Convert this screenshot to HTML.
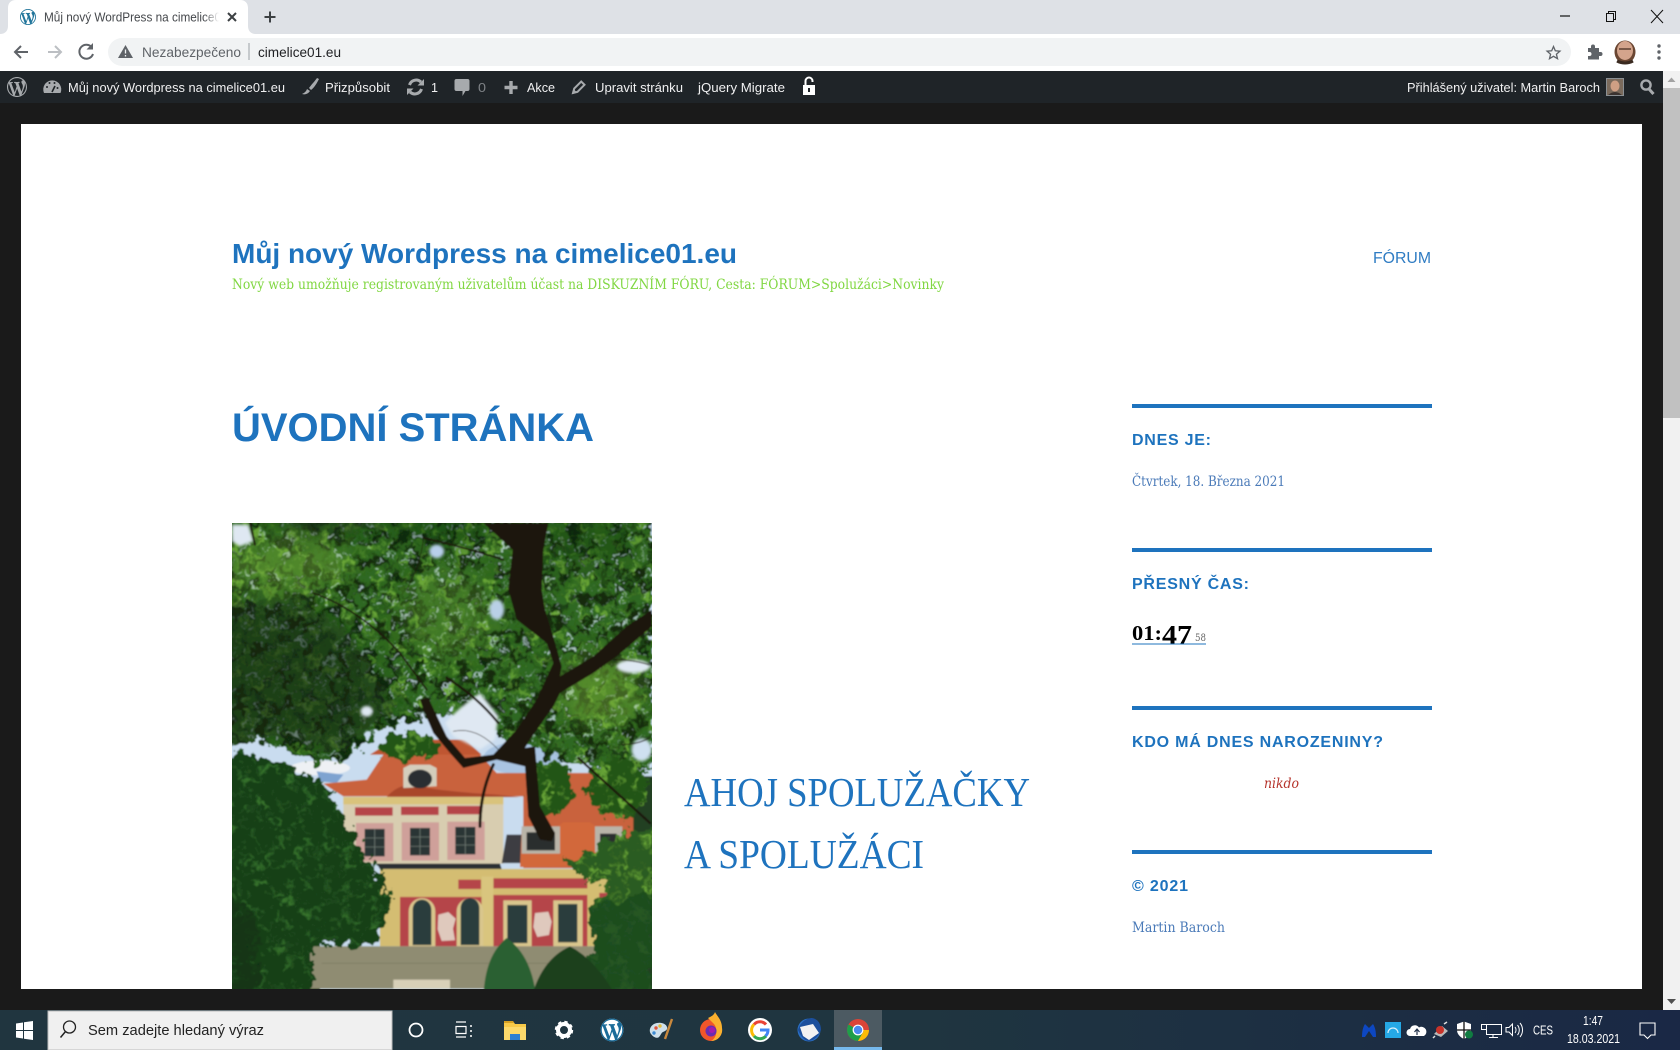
<!DOCTYPE html>
<html lang="cs"><head><meta charset="utf-8"><title>Můj nový WordPress na cimelice01.eu</title>
<style>html,body{margin:0;padding:0;background:#1a1a1a;overflow:hidden}svg{display:block}
.s{font-family:"Liberation Sans",sans-serif}.d{font-family:"DejaVu Serif","Liberation Serif",serif}.l{font-family:"Liberation Serif",serif}
.w{font-family:"Liberation Sans",sans-serif;font-size:13px;fill:#f0f0f1}
.h{font-family:"Liberation Sans",sans-serif;font-size:16px;font-weight:bold;fill:#1e73be}
.b{font-family:"DejaVu Serif","Liberation Serif",serif;font-size:14px;fill:#4a7ab8}
</style></head><body>
<svg xmlns="http://www.w3.org/2000/svg" width="1680" height="1050" viewBox="0 0 1680 1050">
<defs>
<path id="wp" d="M20 10c0-5.51-4.49-10-10-10C4.48 0 0 4.49 0 10c0 5.52 4.48 10 10 10 5.51 0 10-4.48 10-10zM7.78 15.37L4.37 6.22c.55-.02 1.17-.08 1.17-.08.5-.06.44-1.13-.06-1.11 0 0-1.45.11-2.37.11-.18 0-.37 0-.58-.01C4.12 2.69 6.87 1.11 10 1.11c2.33 0 4.45.87 6.05 2.34-.68-.11-1.65.39-1.65 1.58 0 .74.45 1.36.9 2.1.35.61.55 1.36.55 2.46 0 1.49-1.4 5-1.4 5l-3.03-8.37c.54-.02.82-.17.82-.17.5-.05.44-1.25-.06-1.22 0 0-1.44.12-2.38.12-.87 0-2.33-.12-2.33-.12-.5-.03-.56 1.2-.06 1.22l.92.08 1.26 3.41zM17.41 10c.24-.64.74-1.87.43-4.25.7 1.29 1.05 2.71 1.05 4.25 0 3.29-1.73 6.24-4.4 7.78.97-2.59 1.94-5.2 2.92-7.78zM6.1 18.09C3.12 16.65 1.11 13.53 1.11 10c0-1.3.23-2.48.72-3.59C3.25 10.3 4.67 14.2 6.1 18.09zm4.03-6.63l2.58 6.98c-.86.29-1.76.45-2.71.45-.79 0-1.57-.11-2.29-.33.81-2.38 1.62-4.74 2.42-7.1z"/>
<linearGradient id="tb" x1="0" x2="1" y1="0" y2="0"><stop offset="0" stop-color="#20353f"/><stop offset=".55" stop-color="#1f3540"/><stop offset="1" stop-color="#1a2845"/></linearGradient>
<linearGradient id="fade" x1="0" x2="1"><stop offset="0" stop-color="#fff" stop-opacity="0"/><stop offset="1" stop-color="#fff"/></linearGradient>
<clipPath id="ph"><rect x="36" y="40" width="1260" height="1397"/></clipPath>
<clipPath id="can"><path d="M0 0H1340V815L1240 800 1170 805 1090 785 1030 775 960 740 880 722 830 690 790 640 700 650 640 660 560 680 490 705 450 750 400 795 300 790 220 755 130 720 0 770Z"/></clipPath>
<clipPath id="ltree"><path d="M0 760L130 770 230 795 300 835 370 875 390 930 440 1020 500 1110 555 1200 520 1300 470 1350 320 1340 310 1480H0Z"/></clipPath>
<clipPath id="rtree"><path d="M1340 990L1220 1010 1150 1060 1070 1090 1130 1140 1200 1160 1140 1230 1160 1330 1100 1480H1340Z"/></clipPath>
<clipPath id="blobs"><ellipse cx="600" cy="745" rx="95" ry="42"/><ellipse cx="1025" cy="870" rx="66" ry="85"/><ellipse cx="1230" cy="870" rx="90" ry="90"/></clipPath>
<filter id="f1" x="0" y="0" width="100%" height="100%" color-interpolation-filters="sRGB"><feTurbulence type="fractalNoise" baseFrequency=".03" numOctaves="4" seed="4"/><feColorMatrix values="0 0 0 0 .42  0 0 0 0 .66  0 0 0 0 .22  5 0 0 0 -2.75"/><feGaussianBlur stdDeviation="1.5"/></filter>
<filter id="f2" x="0" y="0" width="100%" height="100%" color-interpolation-filters="sRGB"><feTurbulence type="fractalNoise" baseFrequency=".028" numOctaves="4" seed="11"/><feColorMatrix values="0 0 0 0 .07  0 0 0 0 .16  0 0 0 0 .05  0 6 0 0 -2.9"/><feGaussianBlur stdDeviation="1.5"/></filter>
<filter id="f3" x="0" y="0" width="100%" height="100%" color-interpolation-filters="sRGB"><feTurbulence type="fractalNoise" baseFrequency=".035" numOctaves="4" seed="7"/><feColorMatrix values="0 0 0 0 .22  0 0 0 0 .46  0 0 0 0 .18  4 0 0 0 -2.2"/><feGaussianBlur stdDeviation="1.5"/></filter>
<filter id="f4" x="0" y="0" width="100%" height="100%" color-interpolation-filters="sRGB"><feTurbulence type="fractalNoise" baseFrequency=".05" numOctaves="3" seed="21"/><feColorMatrix values="0 0 0 0 .8  0 0 0 0 .88  0 0 0 0 .93  8 0 0 0 -5.2"/><feGaussianBlur stdDeviation="1"/></filter>
<filter id="bl" x="-30%" y="-30%" width="160%" height="160%"><feGaussianBlur stdDeviation="28"/></filter>
<filter id="bl2"><feGaussianBlur stdDeviation="4"/></filter>
<filter id="soft"><feGaussianBlur stdDeviation="2.500"/></filter>
<filter id="dp" x="-5%" y="-5%" width="110%" height="110%"><feTurbulence type="fractalNoise" baseFrequency=".035" numOctaves="3" seed="9" result="n"/><feDisplacementMap in="SourceGraphic" in2="n" scale="70" xChannelSelector="R" yChannelSelector="G"/></filter>
</defs>

<!-- window -->
<rect width="1680" height="1050" fill="#1a1a1a"/>
<rect width="1680" height="34" fill="#dee1e6"/>
<path d="M0 34C5 34 8 31 8 26V8C8 3 11 0 16 0H240C245 0 248 3 248 8V26C248 31 251 34 256 34Z" fill="#fff"/>
<rect y="34" width="1680" height="37" fill="#fff"/>
<g transform="translate(20 9) scale(.8)"><circle cx="10" cy="10" r="10" fill="#fff"/><use href="#wp" fill="#21759b"/></g>
<text x="44" y="21.500" class="s" font-size="13" fill="#45484c" textLength="177" lengthAdjust="spacingAndGlyphs">Můj nový WordPress na cimelice0</text>
<rect x="204" y="6" width="15" height="22" fill="url(#fade)"/><rect x="219" y="6" width="6" height="22" fill="#fff"/>
<path d="M228 13l8 8M236 13l-8 8" stroke="#3c4043" stroke-width="2" fill="none"/>
<path d="M270 11.500v11M264.500 17h11" stroke="#3c4043" stroke-width="2" fill="none"/>
<path d="M1560 16h10" stroke="#111" stroke-width="1.200"/>
<path d="M1606.500 13.500h7v8h-7zM1608.500 13.500v-2h7v8h-2" stroke="#111" stroke-width="1" fill="none"/>
<path d="M1651 10l12 13M1663 10l-12 13" stroke="#111" stroke-width="1" fill="none"/>
<!-- toolbar -->
<path d="M28 52H16M21 46l-6 6 6 6" stroke="#5f6368" stroke-width="2" fill="none"/>
<path d="M48 52H60M55 46l6 6-6 6" stroke="#bcbfc3" stroke-width="2" fill="none"/>
<path d="M92 47.500A7 7 0 1 0 93 54" stroke="#5f6368" stroke-width="2" fill="none"/><path d="M93 43v6.500h-6.500z" fill="#5f6368"/>
<rect x="108" y="38" width="1463" height="28" rx="14" fill="#f1f3f4"/>
<path d="M125.500 45L133 58H118Z" fill="#5f6368"/><path d="M125.500 49.500v4M125.500 55v1.500" stroke="#f1f3f4" stroke-width="1.300"/>
<text x="142" y="57" class="s" font-size="14" fill="#5f6368" textLength="99" lengthAdjust="spacingAndGlyphs">Nezabezpečeno</text>
<rect x="248.500" y="43" width="1" height="17" fill="#9aa0a6"/>
<text x="258" y="57" class="s" font-size="14" fill="#202124" textLength="83" lengthAdjust="spacingAndGlyphs">cimelice01.eu</text>
<path d="M1553.500 46.500l1.800 4.300 4.600.4-3.500 3 1.100 4.500-4-2.400-4 2.400 1.100-4.500-3.500-3 4.600-.4z" fill="none" stroke="#5f6368" stroke-width="1.300"/>
<path d="M1588 48h3v-1.500a2 2 0 0 1 4 0V48h4v4h1.500a2 2 0 0 1 0 4H1599v3.500h-11V56h1.500a2 2 0 0 0 0-4H1588z" fill="#5f6368"/>
<ellipse cx="1625" cy="52" rx="10.500" ry="11.500" fill="#6a4632"/><ellipse cx="1625" cy="50.500" rx="8" ry="9.500" fill="#d4a48c"/><path d="M1619 49h12" stroke="#4a2f22" stroke-width="1.300"/><path d="M1617 61q8 4 16 0" stroke="#3a2a20" stroke-width="3" fill="none"/>
<circle cx="1659" cy="46" r="1.700" fill="#5f6368"/><circle cx="1659" cy="52" r="1.700" fill="#5f6368"/><circle cx="1659" cy="58" r="1.700" fill="#5f6368"/>

<!-- admin bar -->
<rect y="71" width="1663" height="32" fill="#1f2428"/>
<use href="#wp" transform="translate(7 77)" fill="#a7aaad"/>
<path d="M44 93a9 9 0 1 1 16.500 0z" fill="#a7aaad"/><path d="M52 92l3-6" stroke="#1f2428" stroke-width="1.600"/><circle cx="47" cy="87" r="1" fill="#1f2428"/><circle cx="49.500" cy="83" r="1" fill="#1f2428"/><circle cx="54.500" cy="83" r="1" fill="#1f2428"/><circle cx="57.500" cy="88" r="1" fill="#1f2428"/>
<text x="68" y="92" class="w" textLength="217" lengthAdjust="spacingAndGlyphs">Můj nový Wordpress na cimelice01.eu</text>
<path d="M317 78c-2 3-6 7-8 10l2 2c3-2 6-7 8-11zM307 89c-1 3-3 4-5 5 3 1 6 0 8-3z" fill="#a7aaad"/>
<text x="325" y="92" class="w" textLength="65" lengthAdjust="spacingAndGlyphs">Přizpůsobit</text>
<path d="M409.500 85a7 7 0 0 1 11.500-3M421.500 89a7 7 0 0 1-11.500 3" stroke="#a7aaad" stroke-width="3" fill="none"/><path d="M424 79v6.500H417.500zM407 95V88.500H413.500z" fill="#a7aaad"/>
<text x="431" y="92" class="w" textLength="7" lengthAdjust="spacingAndGlyphs">1</text>
<path d="M456.500 79h11a2 2 0 0 1 2 2v8a2 2 0 0 1-2 2h-2l-3 5v-5h-6a2 2 0 0 1-2-2v-8a2 2 0 0 1 2-2z" fill="#a7aaad"/>
<text x="478" y="92" class="w" style="fill:#7e8286" textLength="8" lengthAdjust="spacingAndGlyphs">0</text>
<path d="M511 81v13M504.500 87.500h13" stroke="#a7aaad" stroke-width="3.400"/>
<text x="527" y="92" class="w" textLength="28" lengthAdjust="spacingAndGlyphs">Akce</text>
<path d="M573 93l1.200-4.500 7-7 3.300 3.300-7 7z" fill="none" stroke="#a7aaad" stroke-width="2"/><path d="M572.500 94l1.500-4.500 3 3z" fill="#a7aaad"/>
<text x="595" y="92" class="w" textLength="88" lengthAdjust="spacingAndGlyphs">Upravit stránku</text>
<text x="698" y="92" class="w" textLength="87" lengthAdjust="spacingAndGlyphs">jQuery Migrate</text>
<path d="M805.500 85v-4a3.500 3.500 0 0 1 7 0v1" fill="none" stroke="#fff" stroke-width="2"/><rect x="803" y="85" width="12" height="10" fill="#fff"/><rect x="808" y="88" width="2" height="4" fill="#1f2428"/>
<text x="1407" y="92" class="w" textLength="193" lengthAdjust="spacingAndGlyphs">Přihlášený uživatel: Martin Baroch</text>
<rect x="1606.500" y="78.500" width="17" height="17" fill="#7a6a5c" stroke="#8a8f93"/><ellipse cx="1615" cy="86" rx="4.500" ry="5.500" fill="#cf9f84"/><path d="M1608 95q7-6 14 0z" fill="#3b3330"/>
<circle cx="1646" cy="85" r="4.600" fill="none" stroke="#a7aaad" stroke-width="2.400"/><path d="M1649 89l4.500 5" stroke="#a7aaad" stroke-width="3"/>

<!-- scrollbar -->
<rect x="1663" y="71" width="17" height="939" fill="#f1f1f1"/>
<rect x="1663" y="88" width="17" height="330" fill="#c1c1c1"/>
<path d="M1667.500 82l4-4.500 4 4.500z" fill="#a3a3a3"/>
<path d="M1667 999h9l-4.500 5z" fill="#505050"/>

<!-- content -->
<rect x="21" y="124" width="1621" height="865" fill="#fff"/>
<text x="232" y="263" class="s" font-size="28" font-weight="bold" fill="#1e73be" textLength="505" lengthAdjust="spacingAndGlyphs">Můj nový Wordpress na cimelice01.eu</text>
<text x="232" y="289" class="d" font-size="14" fill="#81d742" textLength="712" lengthAdjust="spacingAndGlyphs">Nový web umožňuje registrovaným uživatelům účast na DISKUZNÍM FÓRU, Cesta: FÓRUM&gt;Spolužáci&gt;Novinky</text>
<text x="1373" y="263" class="s" font-size="16" fill="#2f7cc3" textLength="58" lengthAdjust="spacingAndGlyphs">FÓRUM</text>
<text x="232" y="441" class="s" font-size="40" font-weight="bold" fill="#1e73be" textLength="362" lengthAdjust="spacingAndGlyphs">ÚVODNÍ STRÁNKA</text>
<text x="684" y="806" class="l" font-size="41" fill="#1e73be" textLength="346" lengthAdjust="spacingAndGlyphs">AHOJ SPOLUŽAČKY</text>
<text x="684" y="868" class="l" font-size="41" fill="#1e73be" textLength="240" lengthAdjust="spacingAndGlyphs">A SPOLUŽÁCI</text>

<!-- sidebar -->
<g fill="#1e73be"><rect x="1132" y="404" width="300" height="4"/><rect x="1132" y="548" width="300" height="4"/><rect x="1132" y="706" width="300" height="4"/><rect x="1132" y="850" width="300" height="4"/></g>
<text x="1132" y="445" class="h" textLength="79" lengthAdjust="spacing">DNES JE:</text>
<text x="1132" y="486" class="b" textLength="153" lengthAdjust="spacingAndGlyphs">Čtvrtek, 18. Března 2021</text>
<text x="1132" y="589" class="h" textLength="117" lengthAdjust="spacing">PŘESNÝ ČAS:</text>
<text x="1132" y="640" class="l" font-size="21" font-weight="bold" fill="#000" textLength="30" lengthAdjust="spacingAndGlyphs">01:</text>
<text x="1162" y="644" class="l" font-size="27" font-weight="bold" fill="#000" textLength="30" lengthAdjust="spacingAndGlyphs">47</text>
<text x="1195" y="641" class="d" font-size="10.500" fill="#666" textLength="11" lengthAdjust="spacingAndGlyphs">58</text>
<rect x="1132" y="643.500" width="74" height="1" fill="#1e73be"/>
<text x="1132" y="747" class="h" textLength="251" lengthAdjust="spacing">KDO MÁ DNES NAROZENINY?</text>
<text x="1264" y="788" class="d" font-size="14" font-style="italic" fill="#b5322a" textLength="35" lengthAdjust="spacingAndGlyphs">nikdo</text>
<text x="1132" y="891" class="h" textLength="56" lengthAdjust="spacing">© 2021</text>
<text x="1132" y="932" class="b" textLength="93" lengthAdjust="spacingAndGlyphs">Martin Baroch</text>

<!-- photo -->
<g transform="translate(232 523) scale(.33333) translate(-36 -40)"><g clip-path="url(#ph)"><g filter="url(#soft)">
<rect x="0" y="0" width="1340" height="1480" fill="#c9dcef"/>
<rect x="1180" y="800" width="160" height="680" fill="#243f22"/>
<rect x="0" y="1290" width="300" height="190" fill="#173f18"/>
<rect x="0" y="760" width="120" height="540" fill="#173f18"/>
<ellipse cx="300" cy="775" rx="90" ry="22" fill="#eef1f4"/><path d="M290 785L370 795 350 820 300 815Z" fill="#7ea3d0"/><ellipse cx="910" cy="745" rx="120" ry="50" fill="#a9c4e2"/>
<!-- building -->
<path d="M450 735L520 690H735L785 735Z" fill="#bf5732"/>
<path d="M310 822L440 810 490 735H780L830 790H1240V1075H910V860H370Z" fill="#c9623c"/>
<path d="M500 862Q540 815 600 830T830 855L900 862Z" fill="#a9472c"/>
<rect x="370" y="862" width="480" height="200" fill="#d8cdb0"/>
<rect x="370" y="862" width="480" height="22" fill="#d9c37c"/>
<g fill="#b5444a"><rect x="405" y="893" width="113" height="25"/><rect x="543" y="891" width="113" height="25"/><rect x="681" y="889" width="100" height="25"/></g>
<g fill="#cfa09a"><rect x="408" y="940" width="112" height="115"/><rect x="545" y="938" width="112" height="115"/><rect x="682" y="936" width="112" height="115"/></g>
<g fill="#2a3634"><rect x="434" y="958" width="60" height="82"/><rect x="570" y="955" width="60" height="82"/><rect x="706" y="952" width="60" height="82"/></g>
<g stroke="#77807a" stroke-width="2" fill="none"><path d="M464 958v82M434 985h60M434 1012h60M600 955v82M570 982h60M570 1010h60M736 952v82M706 980h60M706 1006h60"/></g>
<path d="M550 775L570 765 630 765 650 775 650 830 550 835Z" fill="#d4cdbc"/><ellipse cx="600" cy="808" rx="36" ry="28" fill="#2a2f33"/>
<path d="M845 1060L905 1060 905 975 860 975Z" fill="#3c3e42"/>
<path d="M900 1072L1210 1068 1200 1000 1110 938H1030L1000 960 905 960Z" fill="#d2683a"/>
<rect x="905" y="950" width="115" height="82" fill="#b9b4a8"/><rect x="920" y="968" width="85" height="54" fill="#2b2f2e"/>
<rect x="1125" y="950" width="82" height="78" fill="#b9b4a8"/><rect x="1140" y="972" width="50" height="46" fill="#2b2f2e"/>
<path d="M470 1062H840L845 1078H480Z" fill="#2a2d30"/>
<rect x="480" y="1078" width="700" height="232" fill="#d4bd72"/>
<g fill="#b5444a"><rect x="715" y="1110" width="68" height="28"/><rect x="820" y="1106" width="282" height="30"/><rect x="540" y="1162" width="245" height="148"/><rect x="820" y="1156" width="282" height="154"/><rect x="1138" y="1150" width="42" height="40"/></g>
<rect x="785" y="1100" width="35" height="210" fill="#d9c57e"/>
<path d="M566 1310V1205A40 40 0 0 1 646 1205V1310ZM710 1310V1205A40 40 0 0 1 790 1205V1310ZM850 1310V1172H935V1310ZM1000 1310V1172H1088V1310Z" fill="#d9c68d"/>
<path d="M578 1306V1200A28 30 0 0 1 634 1200V1306ZM722 1306V1195A28 30 0 0 1 778 1195V1306ZM862 1300V1186H922V1300ZM1014 1298V1183H1072V1298Z" fill="#2c3c3c"/>
<g fill="#dfc9bd"><path d="M655 1215l30-8 22 20-8 30 6 35-40 2-12-35z"/><path d="M945 1210l40-4 10 30-8 40-35 6-12-30z"/></g>
<rect x="270" y="1310" width="900" height="127" fill="#8f8c72"/>
<rect x="305" y="1360" width="860" height="2" fill="#7b7860"/><rect x="520" y="1410" width="170" height="27" fill="#d8d0b8"/>
<!-- canopy -->
<g filter="url(#dp)" transform="translate(-35 -35)"><g clip-path="url(#can)">
<rect x="0" y="0" width="1340" height="860" fill="#2f6820"/>
<rect x="0" y="0" width="1340" height="860" filter="url(#f1)"/>
<rect x="0" y="0" width="1340" height="860" filter="url(#f2)"/>
<rect x="0" y="0" width="1340" height="860" filter="url(#f4)" opacity=".8"/>
<g filter="url(#bl)">
<path d="M0 320L280 300 440 420 560 640 400 760 200 720 0 740Z" fill="#10290c" opacity=".6"/>
<path d="M160 0H560L520 90 250 120Z" fill="#10290c" opacity=".55"/>
<ellipse cx="700" cy="90" rx="160" ry="40" fill="#10290c" opacity=".4"/>
<ellipse cx="1120" cy="130" rx="170" ry="70" fill="#10290c" opacity=".25"/>
<ellipse cx="230" cy="200" rx="190" ry="70" fill="#7fb63c" opacity=".4"/>
<ellipse cx="720" cy="350" rx="140" ry="130" fill="#6ea338" opacity=".3"/>
<ellipse cx="1180" cy="580" rx="120" ry="110" fill="#8abd3f" opacity=".4"/>
</g>
</g></g>
<g filter="url(#dp)" transform="translate(-35 -35)"><g clip-path="url(#blobs)">
<rect x="500" y="690" width="840" height="280" fill="#245419"/>
<rect x="500" y="690" width="840" height="280" filter="url(#f1)"/>
</g></g>
<g fill="#dfe8f2" filter="url(#bl2)">
<path d="M36 45H85L100 95 60 110 36 95Z"/>
<ellipse cx="650" cy="125" rx="22" ry="20" fill="#b8cfea"/>
<path d="M675 640Q720 590 780 550L835 620 825 690 780 720 700 680Z"/>
<ellipse cx="440" cy="605" rx="18" ry="16"/>
<ellipse cx="1240" cy="470" rx="50" ry="20"/>
<ellipse cx="1265" cy="720" rx="30" ry="34" fill="#cfe0f0"/>
<ellipse cx="830" cy="300" rx="22" ry="30" fill="#b9d0e6"/>
</g>
<!-- left dark tree -->
<g filter="url(#dp)" transform="translate(-35 -35)"><g clip-path="url(#ltree)">
<rect x="0" y="740" width="600" height="740" fill="#173f18"/>
<rect x="0" y="740" width="600" height="740" filter="url(#f3)"/>
<path d="M0 1190L140 1240 150 1480H0Z" fill="#0f3014" opacity=".6"/>
</g></g>
<!-- right foliage -->
<g filter="url(#dp)" transform="translate(-35 -35)"><g clip-path="url(#rtree)">
<rect x="1050" y="980" width="290" height="500" fill="#2c5c20"/>
<rect x="1050" y="980" width="290" height="500" filter="url(#f1)"/>
<path d="M1140 1230L1340 1180V1480H1100Z" fill="#1c4a20" opacity=".85"/>
</g></g>
<!-- shrubs -->
<path d="M790 1480Q790 1340 860 1285 940 1340 950 1480Z" fill="#2b6132"/>
<path d="M930 1480Q960 1350 1050 1310 1130 1350 1200 1480Z" fill="#1d3f1a"/>
<!-- trunk -->
<path d="M790 40H985L970 120 965 240 975 300 1000 380 1025 470 1020 500 1120 440 1220 350 1296 300V350L1190 440 1120 490 1020 550 1000 590 930 690 915 715 945 710 960 890 1005 970 995 995 960 990 925 920 915 770 830 750 730 775 690 730 640 670 610 600 600 570 625 565 680 680 735 745 820 735 890 660 950 570 1000 460 980 400 890 330 865 240 878 120Z" fill="#1c120c"/>
<g fill="none" stroke="#1c120c" stroke-linecap="round">
<path d="M610 85Q720 110 850 150" stroke-width="5"/><path d="M280 250Q420 300 540 430L620 540" stroke-width="5"/>
<path d="M680 505Q770 560 835 640" stroke-width="7"/><path d="M820 765Q780 850 780 950" stroke-width="9"/>
<path d="M1075 745Q1180 840 1290 940" stroke-width="7"/><path d="M1180 450Q1240 450 1285 465" stroke-width="3"/>
<path d="M1205 705Q1250 705 1290 685" stroke-width="3"/><path d="M560 240Q600 170 610 90" stroke-width="2"/>
<path d="M700 665Q770 650 835 720" stroke-width="2"/><path d="M90 40L105 105" stroke-width="6"/>
</g>
</g></g></g>

<!-- taskbar -->
<rect y="1010" width="1680" height="40" fill="url(#tb)"/>
<g fill="#fff"><path d="M16 1023.500l7-1v7.500h-7zM24 1022.300l9-1.300V1030h-9zM16 1031h7v7.500l-7-1zM24 1031h9v9l-9-1.300z"/></g>
<rect x="48" y="1011" width="344" height="39" fill="#f0f0f0" stroke="#bdbdbd" stroke-width="1"/>
<circle cx="69.500" cy="1027" r="6" fill="none" stroke="#222" stroke-width="1.300"/><path d="M65.500 1031.500l-5 6" stroke="#222" stroke-width="1.500"/>
<text x="88" y="1035" class="s" font-size="15" fill="#222" textLength="176" lengthAdjust="spacingAndGlyphs">Sem zadejte hledaný výraz</text>
<circle cx="416" cy="1030" r="6.500" fill="none" stroke="#fff" stroke-width="1.800"/>
<g stroke="#fff" stroke-width="1.200" fill="none"><path d="M456 1022h10M456 1037h10M456 1026.500h10v7h-10z"/><path d="M470 1026h2M470 1031h2M470 1036h2" stroke-width="1.600"/></g>
<path d="M504 1021h9l2 3h11v16h-22z" fill="#f7c948"/><rect x="504" y="1027" width="22" height="13" fill="#fcd96b"/><rect x="510" y="1034" width="10" height="6" fill="#2d7fd3"/><path d="M504 1021h9l1 2h-10z" fill="#d59f22"/>
<circle cx="564" cy="1030" r="6" fill="none" stroke="#fff" stroke-width="4"/><circle cx="564" cy="1030" r="8" fill="none" stroke="#fff" stroke-width="2.400" stroke-dasharray="3.300 3"/>
<g transform="translate(600.500 1018.500) scale(1.150)"><circle cx="10" cy="10" r="10" fill="#fff"/><use href="#wp" fill="#1b6c99"/></g>
<path d="M651 1034c-3-4 0-10 6-11 5-1 9 1 10 4s-2 4-4 5-2 3-4 5-6 0-8-3z" fill="#cfe0ea"/><circle cx="656" cy="1028" r="1.700" fill="#e0553c"/><circle cx="660" cy="1026" r="1.700" fill="#e6bd3c"/><circle cx="654" cy="1033" r="1.700" fill="#3c8ad2"/><path d="M672 1019l-7 20" stroke="#c9893d" stroke-width="2.400"/>
<circle cx="711" cy="1030" r="11" fill="#f0562a"/><path d="M708 1018c4-2 6-3 7-6 2 4 7 8 7 16a11 11 0 0 1-11 13c6-3 7-12 3-17z" fill="#fbb12f"/><circle cx="711" cy="1031" r="5.500" fill="#6a2db0"/><circle cx="712" cy="1030" r="3" fill="#f0a" opacity=".4"/>
<circle cx="760" cy="1030" r="12" fill="#fff"/>
<path d="M766 1024.500A8 8 0 0 0 754 1024.500" fill="none" stroke="#ea4335" stroke-width="3"/><path d="M754 1024.500A8 8 0 0 0 754 1036" fill="none" stroke="#fbbc05" stroke-width="3"/><path d="M754 1036A8 8 0 0 0 766 1036" fill="none" stroke="#34a853" stroke-width="3"/><path d="M760 1030h8a8 8 0 0 1-2.500 6" fill="none" stroke="#4285f4" stroke-width="3"/>
<circle cx="809" cy="1030" r="11.500" fill="#2a6fc4"/><path d="M798 1030c2-8 9-12 14-12 6 1 9 6 9 12-2 6-6 10-12 11-4 0-8-4-11-11z" fill="#1c4f9c"/><path d="M800 1027l13-3 6 9-10 7-6-4z" fill="#f2f2f2"/>
<rect x="834" y="1010" width="48" height="40" fill="#4c5a62"/><rect x="834" y="1047" width="48" height="3" fill="#76b9ed"/>
<circle cx="858" cy="1030" r="11" fill="#db4437"/><path d="M858 1030l-9.500-5.500a11 11 0 0 0 9.500 16.500l5.500-9.500z" fill="#1e9e4a"/><path d="M858 1030h11a11 11 0 0 1-11 11l5.500-9.500z" fill="#fbbc05"/><circle cx="858" cy="1030" r="5.400" fill="#fff"/><circle cx="858" cy="1030" r="4.200" fill="#4a8af0"/>
<!-- tray -->
<path d="M1362 1037c0-6 1-10 3-13l4 4 4-4c2 3 3 7 3 13h-3l-4-6-4 6z" fill="#0d47c1"/>
<rect x="1385" y="1022" width="16" height="16" fill="#25a8e6"/><path d="M1388 1033a5 5 0 0 1 10 0" fill="none" stroke="#d7f0fb" stroke-width="1.200"/>
<path d="M1410 1036a3.500 3.500 0 0 1 0-7 5 5 0 0 1 9-1.500 4.500 4.500 0 0 1 5 8.500z" fill="#fff"/><path d="M1417 1035v-5M1414.500 1032l2.500-3 2.500 3" stroke="#20304a" stroke-width="1.200" fill="none"/>
<path d="M1434 1034l8-8 6 5-7 6z" fill="#b9b9b9"/><circle cx="1440" cy="1030" r="4" fill="#c8332a"/><path d="M1444 1024l3-2M1433 1038l2-2" stroke="#ddd" stroke-width="1.500"/>
<path d="M1457 1024l7-2.500 7 2.500v6c0 4-3 7-7 9-4-2-7-5-7-9z" fill="#fff"/><path d="M1464 1021.500v17.500M1457 1030h14" stroke="#111" stroke-width="1.300"/><circle cx="1469" cy="1034.500" r="4" fill="#107c41"/>
<g fill="none" stroke="#fff" stroke-width="1"><rect x="1486.500" y="1024.500" width="15" height="10"/><rect x="1481.500" y="1024.500" width="5" height="5" fill="#20304a"/><path d="M1493 1034.500v3M1489 1037.500h9"/></g>
<path d="M1506 1027.500h3l3.500-3.500v11.500l-3.500-3.500h-3z" fill="none" stroke="#fff"/><path d="M1515 1027a5 5 0 0 1 0 6M1517.500 1025a8 8 0 0 1 0 10M1520 1023a11 11 0 0 1 0 14" fill="none" stroke="#fff"/>
<text x="1533" y="1034.500" class="s" font-size="13" fill="#fff" textLength="20" lengthAdjust="spacingAndGlyphs">CES</text>
<text x="1583" y="1025" class="s" font-size="12.500" fill="#fff" textLength="20" lengthAdjust="spacingAndGlyphs">1:47</text>
<text x="1567" y="1043" class="s" font-size="12.500" fill="#fff" textLength="53" lengthAdjust="spacingAndGlyphs">18.03.2021</text>
<path d="M1640 1023h15v12h-4l-3.500 3.500-3.500-3.500h-4z" fill="none" stroke="#fff" stroke-width="1.100"/>
</svg>
</body></html>
